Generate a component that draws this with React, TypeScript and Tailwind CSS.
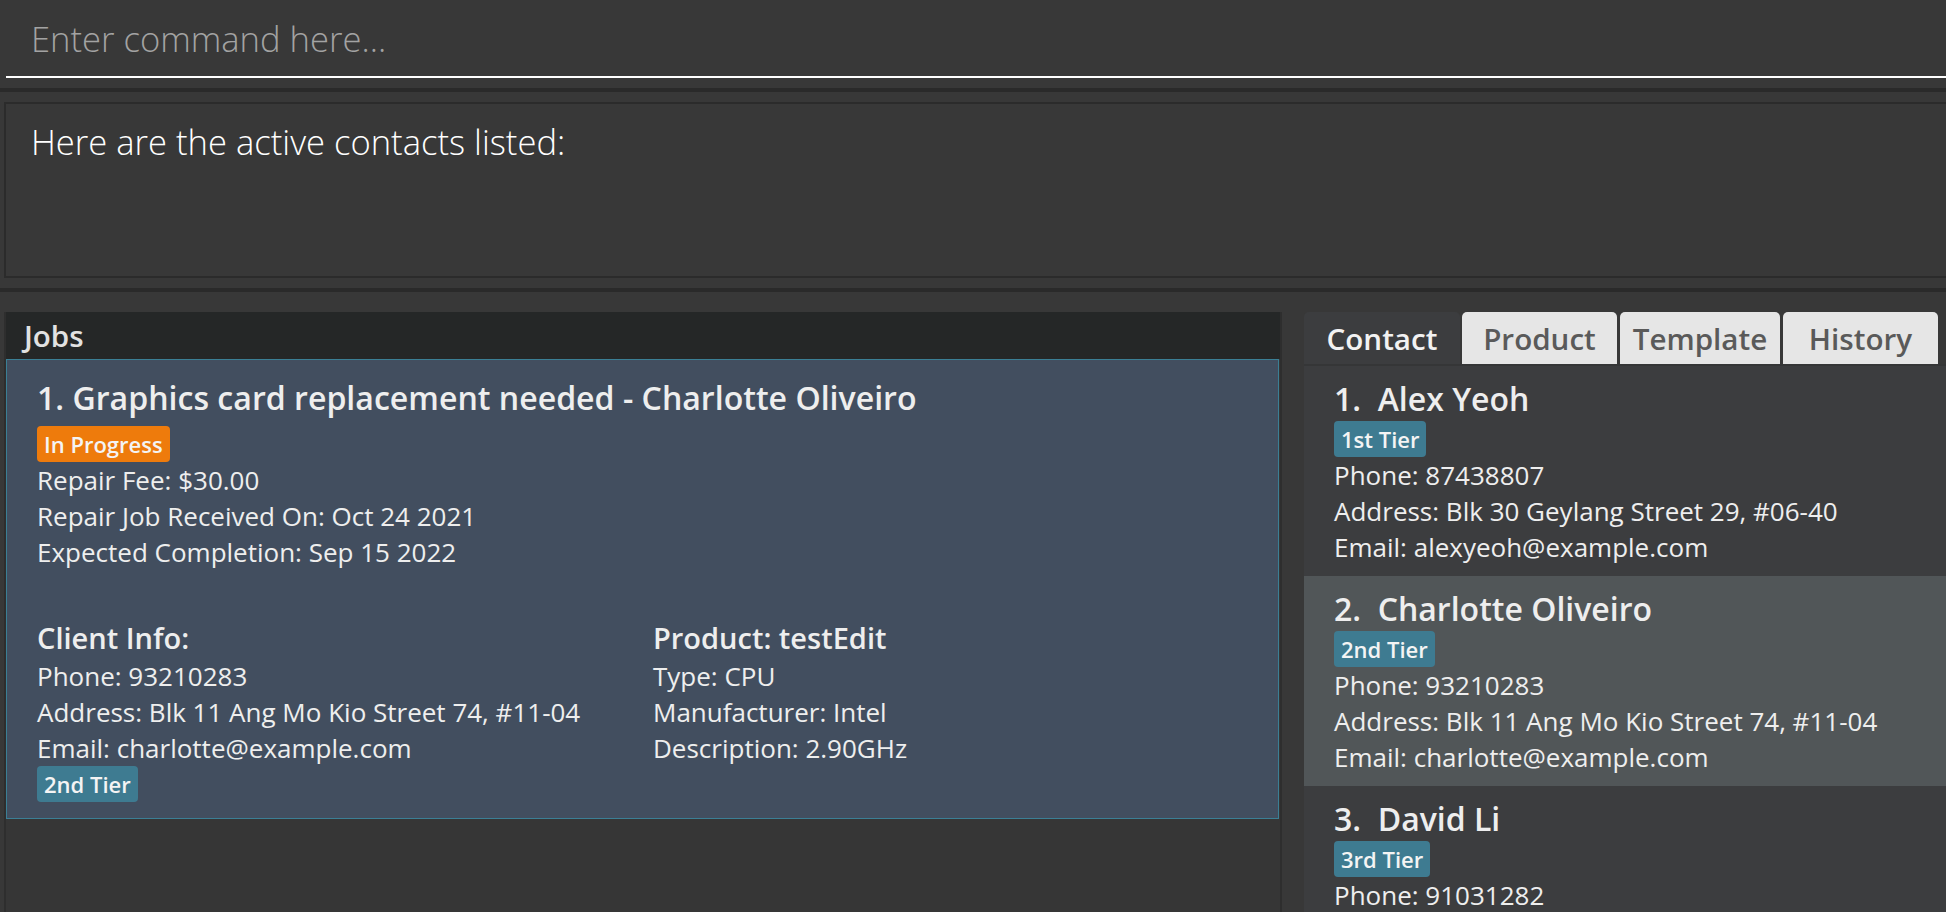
import React from 'react'

interface Contact {
  name: string
  tier: string
  phone: string
  address: string
  email: string
}

const CONTACTS: Contact[] = [
  { name: 'Alex Yeoh', tier: '1st Tier', phone: '87438807', address: 'Blk 30 Geylang Street 29, #06-40', email: 'alexyeoh@example.com' },
  { name: 'Charlotte Oliveiro', tier: '2nd Tier', phone: '93210283', address: 'Blk 11 Ang Mo Kio Street 74, #11-04', email: 'charlotte@example.com' },
  { name: 'David Li', tier: '3rd Tier', phone: '91031282', address: 'Blk 436 Serangoon Gardens Street 26, #16-43', email: 'lidavid@example.com' },
]

const TABS = [
  { label: 'Contact', width: 'w-[156px]', active: true },
  { label: 'Product', width: 'w-[155px]', active: false },
  { label: 'Template', width: 'w-[160px]', active: false },
  { label: 'History', width: 'w-[155px]', active: false },
]

function Tag({ children, color = 'bg-[#3e7b91]' }: { children: React.ReactNode; color?: string }) {
  return (
    <div className="flex">
      <span className={`h-[36px] px-[7px] rounded-[4px] ${color} text-[22px] leading-[36px] font-semibold text-[#f4f4f4]`}>
        {children}
      </span>
    </div>
  )
}

function Line({ children }: { children: React.ReactNode }) {
  return <div className="text-[26px] leading-[36px] text-[#eeeeee] whitespace-nowrap">{children}</div>
}

export default function App() {
  const selected = 1

  return (
    <div className="w-[1946px] h-[912px] overflow-hidden bg-[#383838] font-['Open_Sans',sans-serif] flex flex-col">
      {/* command box */}
      <div className="h-[76px] pl-[31px] pt-[15px]">
        <input
          readOnly
          placeholder="Enter command here..."
          className="w-full h-[47px] bg-transparent outline-none text-[34.6px] font-light leading-[47px] text-white placeholder:text-[#a3a3a3]"
        />
      </div>
      <div className="h-[2px] ml-[6px] bg-white" />
      <div className="h-[10px]" />
      <div className="h-[4px] bg-[#2a2a2a]" />
      <div className="h-[10px]" />

      {/* result display */}
      <div className="h-[176px] ml-[4px] mr-[-10px] border-2 border-[#2b2b2b] pl-[25px] pt-[14px]">
        <p className="text-[34.6px] font-light leading-[47px] text-white">Here are the active contacts listed:</p>
      </div>
      <div className="h-[10px]" />
      <div className="h-[4px] bg-[#2a2a2a]" />
      <div className="h-[20px]" />

      <div className="flex-1 min-h-0 flex">
        {/* jobs panel */}
        <div className="w-[1278px] ml-[4px] bg-[#363636] border-l-2 border-r-2 border-[#2e2e2e] flex flex-col">
          <div className="h-[47px] bg-[#252727] pl-[18px] text-[29.5px] font-semibold leading-[47px] text-[#e2e2e2]">Jobs</div>
          <div className="mr-[1px] border border-[#3b7f95] bg-[#424e5f] pl-[30px] pr-[20px] pt-[16px] pb-[16px]">
            <div className="text-[32.1px] font-semibold leading-[44px] text-[#eeeeee] whitespace-nowrap">
              1. Graphics card replacement needed - Charlotte Oliveiro
            </div>
            <div className="mt-[6px]">
              <Tag color="bg-[#ee7b0c]">In Progress</Tag>
            </div>
            <Line>Repair Fee: $30.00</Line>
            <Line>Repair Job Received On: Oct 24 2021</Line>
            <Line>Expected Completion: Sep 15 2022</Line>
            <div className="mt-[48px] flex">
              <div className="w-[616px]">
                <div className="text-[29px] font-semibold leading-[40px] text-[#eeeeee]">Client Info:</div>
                <Line>Phone: 93210283</Line>
                <Line>Address: Blk 11 Ang Mo Kio Street 74, #11-04</Line>
                <Line>Email: charlotte@example.com</Line>
                <Tag>2nd Tier</Tag>
              </div>
              <div>
                <div className="text-[29px] font-semibold leading-[40px] text-[#eeeeee]">Product: testEdit</div>
                <Line>Type: CPU</Line>
                <Line>Manufacturer: Intel</Line>
                <Line>Description: 2.90GHz</Line>
              </div>
            </div>
          </div>
        </div>

        {/* right tab panel */}
        <div className="ml-[22px] flex-1 min-w-0 flex flex-col">
          <div className="h-[52px] flex">
            {TABS.map((tab, i) => (
              <div
                key={tab.label}
                className={`${tab.width} ${i === 0 ? '' : i === 1 ? 'ml-[2px]' : 'ml-[3px]'} rounded-t-[5px] text-center text-[29.6px] font-semibold leading-[53px] ${
                  tab.active ? 'bg-[#3c3d3f] text-[#f2f2f2]' : 'bg-[#e6e6e6] text-[#5a5a5a]'
                }`}
              >
                {tab.label}
              </div>
            ))}
          </div>
          <div className="flex-1 bg-[#3c3d3f] border-t-2 border-[#353637]">
            {CONTACTS.map((c, i) => (
              <div key={c.name} className={`pl-[30px] pt-[11px] pb-[11px] ${i === selected ? 'bg-[#515658]' : ''}`}>
                <div className="text-[32px] font-semibold leading-[44px] text-[#eeeeee] whitespace-pre">
                  {`${i + 1}.  ${c.name}`}
                </div>
                <Tag>{c.tier}</Tag>
                <Line>Phone: {c.phone}</Line>
                <Line>Address: {c.address}</Line>
                <Line>Email: {c.email}</Line>
              </div>
            ))}
          </div>
        </div>
      </div>
    </div>
  )
}
